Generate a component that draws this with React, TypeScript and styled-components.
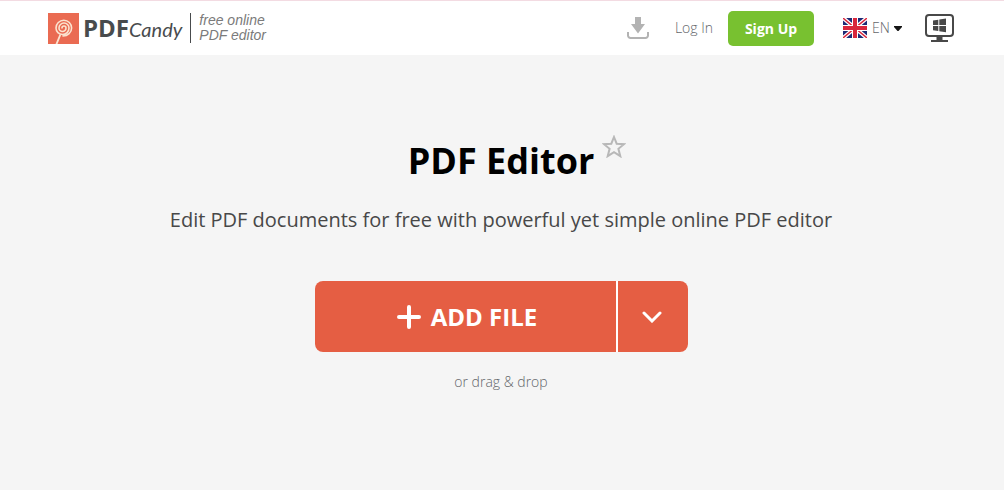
import React from "react";
import styled, { createGlobalStyle } from "styled-components";

const GlobalStyle = createGlobalStyle`
  * { box-sizing: border-box; }
  html { min-height: 100%; background: #f5f5f5; }
  body { margin: 0; font-family: "Open Sans", sans-serif; color: #484848; }
  button, select { font-family: inherit; }
  svg { display: block; flex: none; }
`;

const Header = styled.header`
  display: flex;
  align-items: center;
  justify-content: space-between;
  height: 55px;
  padding: 0 50px 0 48px;
  background: #fff;
  border-top: 1px solid #f3dbe2;
`;

const Brand = styled.a`
  display: flex;
  align-items: center;
  color: #484b4d;
  text-decoration: none;
`;

const BrandName = styled.span`
  display: flex;
  align-items: baseline;
  margin: 0 8px 0 4px;
  line-height: 32px;
`;

const BrandBold = styled.span`
  font-size: 24px;
  font-weight: 700;
`;

const BrandScript = styled.span`
  font-family: Lato, cursive;
  font-size: 20px;
  font-style: italic;
`;

const Tagline = styled.span`
  padding: 0 0 0 8px;
  border-left: 1px solid #484b4d;
  color: #7b7b7b;
  font-family: "Liberation Sans", sans-serif;
  font-size: 14px;
  font-style: italic;
  line-height: 15px;
`;

const Nav = styled.nav`
  display: flex;
  align-items: center;
`;

const IconLink = styled.a`
  display: block;
`;

const LoginLink = styled.a`
  margin: 0 15px 0 26px;
  color: #63666a;
  font-size: 14px;
  font-weight: 300;
  line-height: 20px;
  text-decoration: none;
`;

const SignUpButton = styled.button`
  width: 86px;
  height: 35px;
  padding: 0;
  border: 0;
  border-radius: 5px;
  background: #78c130;
  color: #fff;
  font-size: 14px;
  font-weight: 700;
`;

const Language = styled.label`
  display: flex;
  align-items: center;
  margin: 0 23px 0 29px;
`;

const LanguageSelect = styled.select`
  appearance: none;
  width: 22px;
  margin: 0 0 0 5px;
  padding: 0;
  border: 0;
  background: transparent;
  color: #63666a;
  font-size: 14px;
  font-weight: 300;
  line-height: 20px;
`;

const Main = styled.main`
  display: flex;
  flex-direction: column;
  align-items: center;
  padding: 80px 26px 80px 24px;
`;

const TitleRow = styled.div`
  display: grid;
  grid-template-columns: 1fr auto 1fr;
  column-gap: 8px;
  width: 100%;
`;

const Title = styled.h1`
  grid-column: 2;
  margin: 0;
  color: #000;
  font-size: 36px;
  font-weight: 700;
  line-height: 52px;
`;

const FavouriteButton = styled.button`
  justify-self: start;
  align-self: start;
  padding: 0;
  border: 0;
  background: none;
`;

const Subtitle = styled.p`
  margin: 18px 0 46px;
  font-size: 20px;
  line-height: 30px;
  text-align: center;
`;

const Upload = styled.div`
  display: flex;
  gap: 2px;
  overflow: hidden;
  border-radius: 8px;
  background: #fff;
`;

const UploadButton = styled.button<{ $wide?: boolean }>`
  display: flex;
  align-items: center;
  justify-content: center;
  gap: 10px;
  width: ${(p) => (p.$wide ? "301px" : "70px")};
  height: 71px;
  padding: ${(p) => (p.$wide ? "0 0 0 4px" : "0 2px 0 0")};
  border: 0;
  background: #e55e43;
  color: #fff;
  font-size: 24px;
  font-weight: 700;
`;

const DropHint = styled.p`
  margin: 20px 0 0;
  color: #63666a;
  font-size: 14px;
  font-weight: 300;
  line-height: 20px;
`;

const Lollipop = () => (
  <svg width="31" height="31" viewBox="0 0 31 31" aria-hidden="true">
    <rect width="31" height="31" fill="#ea6b52" />
    <g fill="none" stroke="#fbe3cf" strokeWidth="1.6" strokeLinecap="round">
      <path d="M14 15a2 2 0 0 1 4 0a3.500 3.500 0 0 1-7 0a5 5 0 0 1 10 0a6.500 6.500 0 0 1-13 0a7.800 7.800 0 0 1 15.600 0c0 4.500-3.800 8-8.600 8" />
      <path d="M12 22.500 8.500 31" strokeWidth="1.900" />
    </g>
  </svg>
);

const DownloadIcon = () => (
  <svg width="22" height="22" viewBox="0 0 22 22" aria-hidden="true">
    <path d="M8 0h6v7h4l-7 9.500-7-9.500h4z" fill="#b3b3b3" />
    <path d="M1 15v3.500a2.500 2.500 0 0 0 2.500 2.500h15a2.500 2.500 0 0 0 2.500-2.500V15" fill="none" stroke="#b3b3b3" strokeWidth="2" />
  </svg>
);

const UkFlag = () => (
  <svg width="24" height="20" viewBox="0 0 24 20" aria-hidden="true">
    <rect width="24" height="20" fill="#1d2a75" />
    <path d="M0 0 24 20M24 0 0 20" stroke="#fff" strokeWidth="4" />
    <path d="M0 0 24 20M24 0 0 20" stroke="#d9263c" strokeWidth="1.4" />
    <path d="M12 0v20M0 10h24" stroke="#fff" strokeWidth="6" />
    <path d="M12 0v20M0 10h24" stroke="#d9263c" strokeWidth="4" />
  </svg>
);

const Caret = () => (
  <svg width="8" height="5" viewBox="0 0 8 5" aria-hidden="true">
    <path d="M0 0h8v1L4.500 5h-1L0 1z" fill="#151515" />
  </svg>
);

const MonitorIcon = () => (
  <svg width="29" height="28" viewBox="0 0 29 28" aria-hidden="true">
    <rect x="1" y="1" width="27" height="21" rx="3" fill="none" stroke="#484848" strokeWidth="2" />
    <path d="M11.500 22h6v4h-6zM6 26h17v2H6z" fill="#484848" />
    <path d="M8 6.500 13.300 5.700v5.200H8zM14.300 5.500 21 4.600v6.300h-6.700zM8 11.900h5.300v5.200L8 16.300zM14.300 11.900H21v6.300l-6.700-.9z" fill="#484848" />
  </svg>
);

const StarIcon = () => (
  <svg width="24" height="23" viewBox="0 0 24 23" aria-hidden="true">
    <path
      d="M12 2 14.700 8.700 22 9.200 16.400 13.800 18.300 21.200 12 17.200 5.700 21.200 7.600 13.800 2 9.200 9.300 8.700z"
      fill="none"
      stroke="#b8b8b8"
      strokeWidth="2"
    />
  </svg>
);

const PlusIcon = () => (
  <svg width="24" height="24" viewBox="0 0 24 24" aria-hidden="true">
    <path d="M12 2v20M2 12h20" stroke="#fff" strokeWidth="4" strokeLinecap="round" />
  </svg>
);

const ChevronIcon = () => (
  <svg width="20" height="12" viewBox="0 0 20 12" aria-hidden="true">
    <path d="M2 2l8 8 8-8" fill="none" stroke="#fff" strokeWidth="3" strokeLinecap="round" />
  </svg>
);

export default function App() {
  return (
    <>
      <GlobalStyle />
      <Header>
        <Brand href="#">
          <Lollipop />
          <BrandName>
            <BrandBold>PDF</BrandBold>
            <BrandScript>Candy</BrandScript>
          </BrandName>
          <Tagline>
            free online
            <br />
            PDF editor
          </Tagline>
        </Brand>
        <Nav>
          <IconLink href="#downloads" aria-label="Downloads">
            <DownloadIcon />
          </IconLink>
          <LoginLink href="#login">Log In</LoginLink>
          <SignUpButton type="button">Sign Up</SignUpButton>
          <Language>
            <UkFlag />
            <LanguageSelect aria-label="Language" defaultValue="en">
              <option value="en">EN</option>
            </LanguageSelect>
            <Caret />
          </Language>
          <IconLink href="#desktop" aria-label="Windows desktop version">
            <MonitorIcon />
          </IconLink>
        </Nav>
      </Header>
      <Main>
        <TitleRow>
          <Title>PDF Editor</Title>
          <FavouriteButton type="button" aria-label="Add to favourites">
            <StarIcon />
          </FavouriteButton>
        </TitleRow>
        <Subtitle>Edit PDF documents for free with powerful yet simple online PDF editor</Subtitle>
        <Upload>
          <UploadButton type="button" $wide>
            <PlusIcon />
            ADD FILE
          </UploadButton>
          <UploadButton type="button" aria-label="More sources">
            <ChevronIcon />
          </UploadButton>
        </Upload>
        <DropHint>or drag &amp; drop</DropHint>
      </Main>
    </>
  );
}
